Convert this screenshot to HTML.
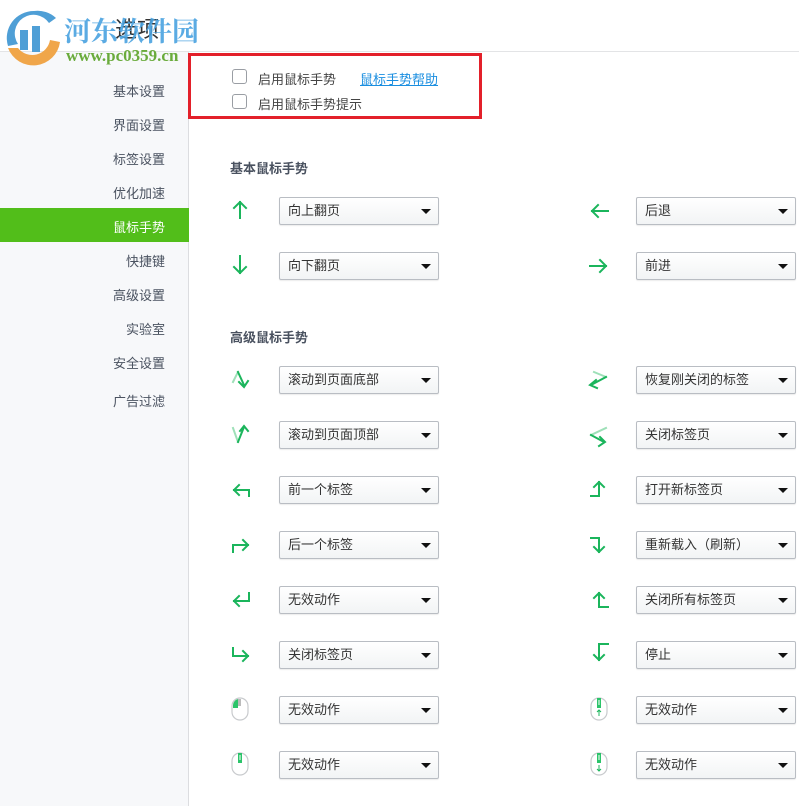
<!DOCTYPE html>
<html><head><meta charset="utf-8"><style>
*{margin:0;padding:0;box-sizing:border-box}
body{width:799px;height:806px;overflow:hidden;background:#fff;font-family:"Liberation Sans","Noto Sans CJK SC",sans-serif;position:relative;color:#333}
.a{position:absolute}
.side{left:0;top:52px;width:189px;height:754px;background:#f7f8fa;border-right:1px solid #dcdde0}
.nav{position:absolute;left:0;width:165px;font-size:13px;color:#4a5260;text-align:right}
.sel{position:absolute;left:0;top:156px;width:189px;height:34px;background:#52be1a}
.dd{position:absolute;width:160px;height:28px;border:1px solid #b9bdc3;border-radius:2px;background:linear-gradient(#fff,#f2f4f5);box-shadow:0 1px 1px rgba(0,0,0,.08);font-size:13px;color:#333;line-height:26px;padding-left:8px}
.dd:after{content:"";position:absolute;right:7px;top:11px;border-left:5px solid transparent;border-right:5px solid transparent;border-top:5px solid #111}
.h{position:absolute;left:230px;font-size:13px;color:#4a5260;font-weight:bold}
.cb{position:absolute;width:15px;height:15px;border:1px solid #9a9ea4;border-radius:3px;background:#fff}
.lb{position:absolute;font-size:13px;color:#444}
</style></head><body>
<div class="a" style="left:0;top:51px;width:799px;height:1px;background:#e3e4e6"></div>
<div class="a side"></div>
<div class="a" style="left:115px;top:12px;font-size:22px;color:#333">选项</div>
<svg class="a" style="left:4px;top:8px" width="60" height="60" viewBox="0 0 60 60">
<path d="M30 3A27 27 0 0 0 4 38L14 36A18 18 0 0 1 45 15L52 10A27 27 0 0 0 30 3Z" fill="#4f9fd6"/>
<path d="M4 40A27 27 0 0 0 56 34L46 32A18 18 0 0 1 14 40Z" fill="#f0a64a"/>
<rect x="16" y="22" width="8" height="20" fill="#4f9fd6"/><rect x="28" y="18" width="8" height="26" fill="#4f9fd6"/>
</svg>
<div class="a" style="left:64px;top:10px;font-size:27px;font-weight:bold;color:#4aa3e0;opacity:.9;font-family:'Liberation Serif','Noto Serif CJK SC',serif">河东软件园</div>
<div class="a" style="left:66px;top:46px;font-size:17px;font-weight:bold;color:#6aab3c;font-family:'Liberation Serif',serif">www.pc0359.cn</div>
<div class="sel a" style="top:208px"></div>
<div class="nav" style="top:81px">基本设置</div>
<div class="nav" style="top:115px">界面设置</div>
<div class="nav" style="top:149px">标签设置</div>
<div class="nav" style="top:183px">优化加速</div>
<div class="nav" style="top:217px;color:#fff">鼠标手势</div>
<div class="nav" style="top:251px">快捷键</div>
<div class="nav" style="top:285px">高级设置</div>
<div class="nav" style="top:319px">实验室</div>
<div class="nav" style="top:353px">安全设置</div>
<div class="nav" style="top:391px">广告过滤</div>
<div class="a" style="left:188px;top:53px;width:294px;height:66px;border:3px solid #e3202a"></div>
<div class="cb" style="left:232px;top:69px"></div><div class="lb" style="left:258px;top:69px">启用鼠标手势</div>
<div class="lb" style="left:360px;top:69px;color:#1a8ee0;text-decoration:underline">鼠标手势帮助</div>
<div class="cb" style="left:232px;top:94px"></div><div class="lb" style="left:258px;top:94px">启用鼠标手势提示</div>
<div class="h" style="top:158px">基本鼠标手势</div>
<div class="h" style="top:327px">高级鼠标手势</div>

<div class="dd" style="left:279px;top:197px">向上翻页</div>
<div class="dd" style="left:636px;top:197px">后退</div>
<div class="dd" style="left:279px;top:252px">向下翻页</div>
<div class="dd" style="left:636px;top:252px">前进</div>
<div class="dd" style="left:279px;top:366px">滚动到页面底部</div>
<div class="dd" style="left:636px;top:366px">恢复刚关闭的标签</div>
<div class="dd" style="left:279px;top:421px">滚动到页面顶部</div>
<div class="dd" style="left:636px;top:421px">关闭标签页</div>
<div class="dd" style="left:279px;top:476px">前一个标签</div>
<div class="dd" style="left:636px;top:476px">打开新标签页</div>
<div class="dd" style="left:279px;top:531px">后一个标签</div>
<div class="dd" style="left:636px;top:531px">重新载入（刷新）</div>
<div class="dd" style="left:279px;top:586px">无效动作</div>
<div class="dd" style="left:636px;top:586px">关闭所有标签页</div>
<div class="dd" style="left:279px;top:641px">关闭标签页</div>
<div class="dd" style="left:636px;top:641px">停止</div>
<div class="dd" style="left:279px;top:696px">无效动作</div>
<div class="dd" style="left:636px;top:696px">无效动作</div>
<div class="dd" style="left:279px;top:751px">无效动作</div>
<div class="dd" style="left:636px;top:751px">无效动作</div>

<svg class="a" style="left:0;top:0" width="799" height="806" fill="none" stroke="#1bb55c" stroke-width="2" stroke-linecap="square">
<path d="M240 218V202M234 208L240 202L246 208"/>
<path d="M240 256V273M234 267L240 273L246 267"/>
<path d="M608 211H592M598 205L592 211L598 217"/>
<path d="M590 266H606M600 260L606 266L600 272"/>
<path d="M233 382L238 372" stroke="#9ee0b8"/><path d="M238 372L244 385M239 382L244 387L248 381"/>
<path d="M233 428L238 442" stroke="#9ee0b8"/><path d="M238 442L244 427M240 431L244 426L248 431"/>
<path d="M594 372L606 377" stroke="#9ee0b8"/><path d="M606 377L591 385M596 380L590 385L597 388"/>
<path d="M606 428L591 435" stroke="#9ee0b8"/><path d="M591 435L604 442M600 437L605 442L599 446"/>
<path d="M249 496V490H234M239 485L234 490L239 495"/>
<path d="M233 552V545H248M243 540L248 545L243 550"/>
<path d="M591 496H599V482M594 487L599 482L604 487"/>
<path d="M591 538H599V552M594 547L599 552L604 547"/>
<path d="M249 593V601H234M239 596L234 601L239 606"/>
<path d="M233 648V656H248M243 651L248 656L243 661"/>
<path d="M608 607H599V593M594 598L599 593L604 598"/>
<path d="M608 644H599V660M594 655L599 660L604 655"/>
</svg>
<svg class="a" style="left:0;top:0" width="799" height="806">
<g fill="#fff" stroke="#c8cacd" stroke-width="1.2">
<rect x="232" y="698" width="16" height="22" rx="8"/>
<rect x="232" y="753" width="16" height="22" rx="8"/>
<rect x="591" y="698" width="16" height="22" rx="8"/>
<rect x="591" y="753" width="16" height="22" rx="8"/>
</g>
<path d="M233 708V705A7 7 0 0 1 238 699V708Z" fill="#2cc46a"/>
<rect x="238" y="699" width="3" height="7" fill="#bbb"/>
<rect x="238" y="753" width="4" height="10" fill="#2cc46a"/><rect x="239.5" y="755" width="1" height="5" fill="#fff"/>
<rect x="597" y="698" width="4" height="10" fill="#2cc46a"/><rect x="598.5" y="700" width="1" height="5" fill="#fff"/>
<path d="M599 716V710M597 712L599 710L601 712" stroke="#1bb55c" fill="none"/>
<rect x="597" y="753" width="4" height="10" fill="#2cc46a"/><rect x="598.5" y="755" width="1" height="5" fill="#fff"/>
<path d="M599 765V771M597 769L599 771L601 769" stroke="#1bb55c" fill="none"/>
</svg>
</body></html>
